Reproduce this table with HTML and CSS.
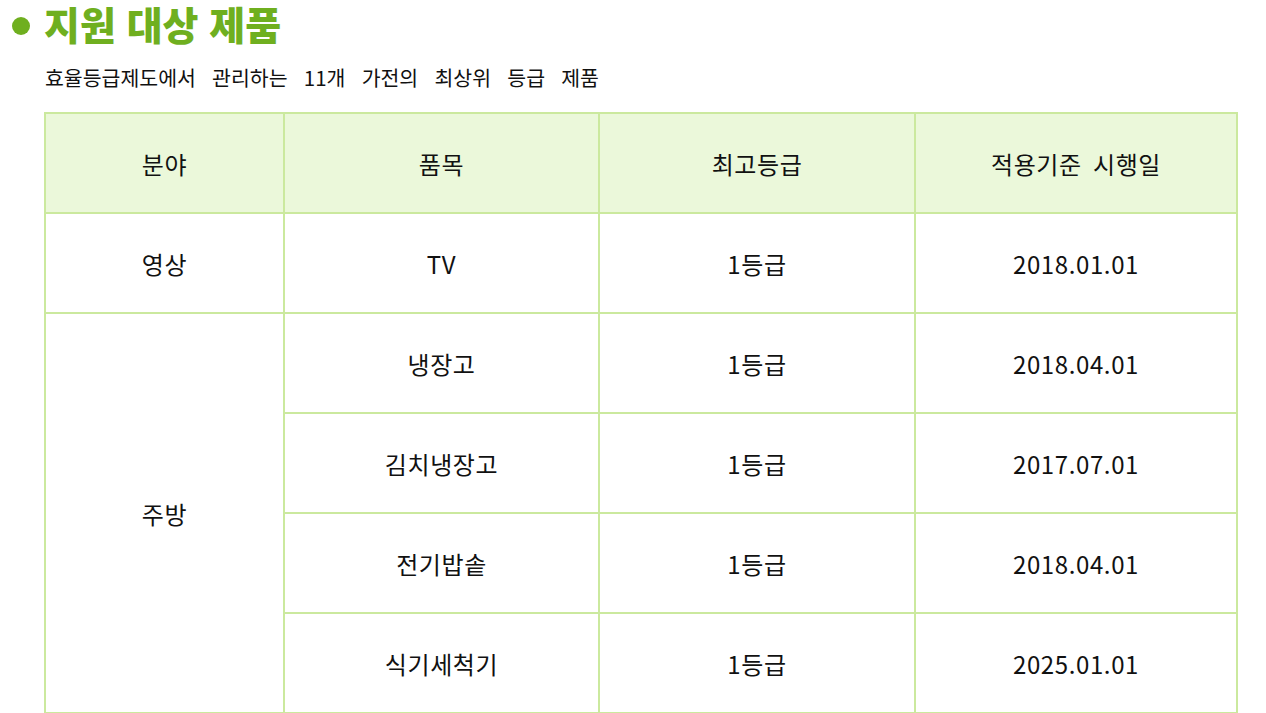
FILE: index.html
```html
<!DOCTYPE html>
<html lang="ko">
<head>
<meta charset="utf-8">
<title>지원 대상 제품</title>
<link rel="stylesheet" href="styles.css">
</head>
<body>
<section class="section">
  <h2 class="title"><span class="dot"></span><span class="title-text">지원 대상 제품</span></h2>
  <p class="desc">효율등급제도에서 관리하는 11개 가전의 최상위 등급 제품</p>
  <table class="products">
    <colgroup>
      <col class="c1"><col class="c2"><col class="c3"><col class="c4">
    </colgroup>
    <thead>
      <tr><th>분야</th><th>품목</th><th>최고등급</th><th>적용기준 시행일</th></tr>
    </thead>
    <tbody>
      <tr><td>영상</td><td>TV</td><td>1등급</td><td>2018.01.01</td></tr>
      <tr><td rowspan="4">주방</td><td>냉장고</td><td>1등급</td><td>2018.04.01</td></tr>
      <tr><td>김치냉장고</td><td>1등급</td><td>2017.07.01</td></tr>
      <tr><td>전기밥솥</td><td>1등급</td><td>2018.04.01</td></tr>
      <tr><td>식기세척기</td><td>1등급</td><td>2025.01.01</td></tr>
    </tbody>
  </table>
</section>
</body>
</html>
```

FILE: styles.css
```css
html { overflow: hidden; }
body {
  margin: 0;
  background: #ffffff;
  font-family: "Noto Sans CJK KR", "Noto Sans", sans-serif;
  color: #111111;
}
.section {
  padding: 0 0 0 12px;
}
.title {
  display: flex;
  align-items: center;
  gap: 14px;
  margin: 0;
  height: 46px;
  color: #6faf1f;
  font-size: 39px;
  font-weight: 900;
  letter-spacing: 0;
}
.dot {
  width: 18px;
  height: 18px;
  border-radius: 50%;
  background: #6faf1f;
  margin-top: 6px;
}
.title-text {
  line-height: 42px;
}
.desc {
  margin: 17px 0 0 33px;
  font-size: 20.5px;
  line-height: 28px;
  color: #111111;
  word-spacing: 10.5px;
}
.products {
  margin: 21px 0 0 32px;
  width: 1192px;
  border-collapse: collapse;
  table-layout: fixed;
}
.c1 { width: 239px; }
.c2 { width: 315px; }
.c3 { width: 316px; }
.c4 { width: 322px; }
.products th,
.products td {
  border: 2px solid #cbe99e;
  height: 98px;
  padding: 0;
  text-align: center;
  vertical-align: middle;
  font-size: 24px;
  font-weight: 400;
  letter-spacing: 0.6px;
  word-spacing: 4px;
  color: #111111;
}
.products th {
  background: #ebf8da;
}
```
